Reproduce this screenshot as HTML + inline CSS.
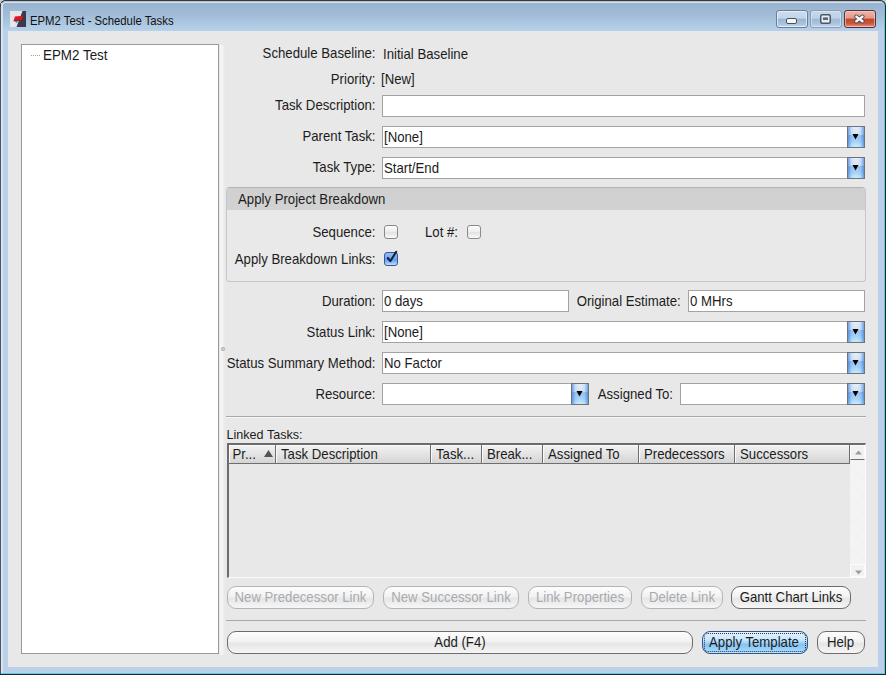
<!DOCTYPE html>
<html><head><meta charset="utf-8">
<style>
*{margin:0;padding:0;box-sizing:border-box}
html,body{width:886px;height:675px;overflow:hidden;background:#c4ccd4}
body{position:relative;font-family:"Liberation Sans",sans-serif;font-size:13.2px;color:#1c1c1c}
.a{position:absolute}
#frame{left:0;top:0;width:886px;height:675px;background:#b8d0e8;border:1px solid #2a2a2a;border-radius:7px 7px 0 0;}
#frame-hl{left:1px;top:1px;width:884px;height:673px;border:1px solid #dbe7f3;border-radius:6px 6px 0 0}
#title{left:2px;top:2px;width:882px;height:29px;background:linear-gradient(#98b4d0,#a6c0da 50%,#b7d1ea)}
#client{left:8px;top:31px;width:870px;height:636px;background:#e8e8e8}
.t{position:absolute;white-space:nowrap;line-height:15px}
.lbl{position:absolute;white-space:nowrap;line-height:15px;text-align:right}
.inp{position:absolute;background:#fff;border:1px solid #a3a3a3;height:22px}
.inp span{position:absolute;left:1px;top:3px;line-height:15px;white-space:nowrap}
.arr{position:absolute;right:-1px;top:-1px;width:18px;height:22px;border:1px solid #6c7480;
 background:linear-gradient(90deg,rgba(30,100,210,.55),rgba(60,130,220,.1) 22%,rgba(0,0,0,0) 40%,rgba(0,0,0,0) 60%,rgba(60,130,220,.1) 78%,rgba(30,100,210,.55)),linear-gradient(#e2edf9,#d4e4f6 40%,#9cc6f0 42%,#a6d0f4 70%,#c6ecfd)}
.arr svg{position:absolute;left:4px;top:7px}
.btn{position:absolute;height:23px;border:1px solid #6c6c6c;border-radius:9px;background:linear-gradient(#fdfdfd,#f2f2f2 45%,#e6e6e6 55%,#f6f6f6);text-align:center;line-height:22px;white-space:nowrap}
.dis{border-color:#b4b4b4;color:#a8abb0}
.cb{position:absolute;width:14px;height:14px;border:1px solid #8a8a8a;border-radius:3px;background:linear-gradient(#fff,#ececec 50%,#e2e2e2 55%,#fafafa)}
.hd{position:absolute;top:0;height:18px;border-right:1px solid #6e6e6e;line-height:19px;white-space:nowrap;padding-left:5px;overflow:hidden;box-shadow:inset 1px 1px 0 #fafafa}
.t,.lbl,.inp span{transform:scaleY(1.1);transform-origin:0 12px}
.s{display:inline-block;line-height:15px;transform:scaleY(1.1);transform-origin:50% 12px}
</style></head><body>
<div class="a" style="left:0;top:0;width:886px;height:675px;background:#1c2626;border-radius:6px 6px 0 0"></div>
<div class="a" style="left:0;top:0;width:885px;height:674px;background:#3a3a3a;border-radius:6px 6px 0 0"></div>
<div class="a" style="left:0;top:7px;width:1px;height:667px;background:#4e565c"></div>
<div class="a" style="left:1px;top:1px;width:884px;height:673px;background:#62c8ea;border-radius:5px 5px 0 0"></div>
<div class="a" style="left:1px;top:1px;width:883px;height:672px;background:#b4c0cc;border-radius:5px 5px 0 0"></div>
<div class="a" style="left:1px;top:3px;width:1px;height:670px;background:#d8e6f4"></div>
<div class="a" style="left:2px;top:2px;width:882px;height:671px;background:#d4e2f0;border-radius:4px 4px 0 0"></div>
<div class="a" style="left:3px;top:3px;width:881px;height:670px;background:#bbd1e9;border-radius:3px 3px 0 0"></div>
<div class="a" style="left:3px;top:3px;width:881px;height:28px;background:linear-gradient(#98b4d0,#a2bdd8 45%,#b8d1ea);border-radius:3px 3px 0 0"></div>
<!-- app icon -->
<svg class="a" style="left:10px;top:11px" width="16" height="16" viewBox="0 0 16 16">
 <rect x="0" y="0" width="16" height="16" fill="#f2f2f2"/>
 <polygon points="0,0 12.5,0 6.5,16 0,16" fill="#e6e6e8"/>
 <polygon points="12.5,0 16,0 16,16 6.5,16" fill="#3a3a48"/>
 <polygon points="4.9,5.6 13,4.8 11.2,9.4 3.5,10.3" fill="#dc1820"/><polygon points="3.5,10.3 11.2,9.4 11.6,8.4 4.1,9.2" fill="#b01018"/>
 <path d="M5,10 L7.8,10 L7.2,12 Q5.5,12 5,10 Z" fill="#2a88d8"/>
</svg>
<div class="t" style="left:30px;top:14px;font-size:12.5px;color:#101010;transform:scaleX(0.905);transform-origin:0 0">EPM2 Test - Schedule Tasks</div>
<!-- title buttons -->
<div class="a" style="left:776px;top:10px;width:32px;height:18px;border:1px solid #6a7d96;border-radius:3px;box-shadow:inset 0 0 0 1px rgba(235,244,252,.75);background:linear-gradient(#cbdcee,#c2d5ea 45%,#9ab5d2 50%,#a8c2dd 80%,#c4d9ee)"></div>
<div class="a" style="left:786px;top:18px;width:11px;height:6px;background:#f6f6f6;border:1px solid #474e5e;border-radius:2px"></div>
<div class="a" style="left:810px;top:10px;width:32px;height:18px;border:1px solid #8a9db6;border-radius:3px;box-shadow:inset 0 0 0 1px rgba(225,236,248,.6);background:linear-gradient(#c6d8ec,#bcd1e8 45%,#a0b9d4 50%,#abc4de 80%,#c2d7ec)"></div>
<svg class="a" style="left:820px;top:14px" width="11" height="10" viewBox="0 0 11 10"><rect x="0.75" y="0.75" width="9.5" height="8.5" rx="1.5" fill="#ececec" stroke="#4e5666" stroke-width="1.5"/><rect x="3" y="3.4" width="5" height="2.6" fill="#4a6890"/></svg>
<div class="a" style="left:844px;top:10px;width:32px;height:18px;border:1px solid #58303c;border-radius:3px;box-shadow:inset 0 0 0 1px rgba(250,210,200,.6);background:linear-gradient(#eeb4a6,#e09a8a 45%,#c44426 50%,#c85a40 80%,#e2a090)"></div>
<svg class="a" style="left:853px;top:13px" width="13" height="12" viewBox="0 0 13 12">
 <path d="M3.3,3.6 L9.5,8.2 M9.5,3.6 L3.3,8.2" stroke="#4a4a56" stroke-width="4.2" stroke-linecap="round"/>
 <path d="M3.3,3.6 L9.5,8.2 M9.5,3.6 L3.3,8.2" stroke="#f8f8f8" stroke-width="2.4" stroke-linecap="round"/>
</svg>

<div id="client" class="a"></div>
<!-- tree panel -->
<div class="a" style="left:21px;top:44px;width:198px;height:610px;background:#fff;border:1px solid #999"></div>
<div class="a" style="left:31px;top:55px;width:10px;height:1px;background:repeating-linear-gradient(90deg,#a0a0a0 0 1px,transparent 1px 2px)"></div>
<div class="t" style="left:43px;top:48px;font-size:13.4px">EPM2 Test</div>
<!-- splitter highlight -->
<div class="a" style="left:220px;top:45px;width:5px;height:610px;background:linear-gradient(90deg,#f6f6f6,#f2f2f2 50%,#e8e8e8)"></div>
<div class="a" style="left:221px;top:347px;width:4px;height:4px;border-radius:50%;background:#d4d4d4;box-shadow:inset 0 0 0 1px #b4b4b4"></div>

<!-- form -->
<div class="lbl" style="right:510.5px;top:46px">Schedule Baseline:</div>
<div class="t" style="left:383px;top:46.5px">Initial Baseline</div>
<div class="lbl" style="right:510.5px;top:72px">Priority:</div>
<div class="t" style="left:381px;top:72px">[New]</div>

<div class="lbl" style="right:510.5px;top:98px">Task Description:</div>
<div class="inp" style="left:382px;top:95px;width:483px"></div>

<div class="lbl" style="right:510.5px;top:129px">Parent Task:</div>
<div class="inp" style="left:382px;top:126px;width:483px"><span>[None]</span><div class="arr"><svg width="7" height="6" viewBox="0 0 7 6"><polygon points="0.5,0 6.5,0 3.5,5.6" fill="#000"/></svg></div></div>

<div class="lbl" style="right:510.5px;top:160px">Task Type:</div>
<div class="inp" style="left:382px;top:157px;width:483px"><span>Start/End</span><div class="arr"><svg width="7" height="6" viewBox="0 0 7 6"><polygon points="0.5,0 6.5,0 3.5,5.6" fill="#000"/></svg></div></div>

<!-- group -->
<div class="a" style="left:226px;top:187px;width:640px;height:95px;border:1px solid #c6c6c6;border-top-color:#b4b4b4;border-radius:4px;background:#e9e9e9;overflow:hidden">
  <div class="a" style="left:0;top:0;width:638px;height:22px;background:linear-gradient(#c8c8c8,#d0d0d0 1px,#d2d2d2)"></div>
</div>
<div class="t" style="left:238px;top:192px">Apply Project Breakdown</div>

<div class="lbl" style="right:510.5px;top:225px">Sequence:</div>
<div class="cb" style="left:384px;top:225px"></div>
<div class="t" style="left:425px;top:225px">Lot #:</div>
<div class="cb" style="left:467px;top:225px"></div>
<div class="lbl" style="right:510.5px;top:252px">Apply Breakdown Links:</div>
<div class="cb" style="left:384px;top:252px;border-color:#4b4f9e;background:linear-gradient(#8ec0f4,#6aa8ee 50%,#5c9cea 55%,#b6e4fc)"></div>
<svg class="a" style="left:385px;top:249px" width="14" height="16" viewBox="0 0 14 16">
 <path d="M2.8,9 L5.3,12.2 L11.2,2.8" stroke="#16203c" stroke-width="2.1" fill="none" stroke-linecap="round" stroke-linejoin="round"/>
</svg>

<div class="lbl" style="right:510.5px;top:294px">Duration:</div>
<div class="inp" style="left:382px;top:290px;width:187px"><span>0 days</span></div>
<div class="lbl" style="right:205.3px;top:294px">Original Estimate:</div>
<div class="inp" style="left:688px;top:290px;width:177px"><span>0 MHrs</span></div>

<div class="lbl" style="right:510.5px;top:325px">Status Link:</div>
<div class="inp" style="left:382px;top:321px;width:483px"><span>[None]</span><div class="arr"><svg width="7" height="6" viewBox="0 0 7 6"><polygon points="0.5,0 6.5,0 3.5,5.6" fill="#000"/></svg></div></div>

<div class="lbl" style="right:510.5px;top:356px">Status Summary Method:</div>
<div class="inp" style="left:382px;top:352px;width:483px"><span>No Factor</span><div class="arr"><svg width="7" height="6" viewBox="0 0 7 6"><polygon points="0.5,0 6.5,0 3.5,5.6" fill="#000"/></svg></div></div>

<div class="lbl" style="right:510.5px;top:387px">Resource:</div>
<div class="inp" style="left:382px;top:383px;width:207px"><div class="arr"><svg width="7" height="6" viewBox="0 0 7 6"><polygon points="0.5,0 6.5,0 3.5,5.6" fill="#000"/></svg></div></div>
<div class="lbl" style="right:213px;top:387px">Assigned To:</div>
<div class="inp" style="left:680px;top:383px;width:185px"><div class="arr"><svg width="7" height="6" viewBox="0 0 7 6"><polygon points="0.5,0 6.5,0 3.5,5.6" fill="#000"/></svg></div></div>

<div class="a" style="left:226px;top:416px;width:640px;height:1px;background:#a8a8a8"></div>
<div class="a" style="left:226px;top:417px;width:640px;height:1px;background:#f6f6f6"></div>

<div class="t" style="left:226.5px;top:428px;font-size:12.6px;transform:scaleY(1.08)">Linked Tasks:</div>

<!-- table -->
<div class="a" style="left:227px;top:443px;width:639px;height:135px;border-left:2px solid #6c6c6c;border-top:2px solid #6c6c6c;border-right:1px solid #fafafa;border-bottom:1px solid #fafafa;background:#e8e8e8"></div>
<div class="a" style="left:229px;top:445px;width:621px;height:19px;background:linear-gradient(#f2f2f2,#e4e4e4 50%,#d4d4d4);border-bottom:1px solid #6e6e6e">
  <div class="hd" style="left:0;width:47px;padding-left:3.5px"><span class="s">Pr...</span></div>
  <div class="hd" style="left:47px;width:155px"><span class="s">Task Description</span></div>
  <div class="hd" style="left:202px;width:51px"><span class="s">Task...</span></div>
  <div class="hd" style="left:253px;width:61px"><span class="s">Break...</span></div>
  <div class="hd" style="left:314px;width:96px"><span class="s">Assigned To</span></div>
  <div class="hd" style="left:410px;width:96px"><span class="s">Predecessors</span></div>
  <div class="hd" style="left:506px;width:115px"><span class="s">Successors</span></div>
</div>
<svg class="a" style="left:264px;top:450px" width="9" height="7" viewBox="0 0 9 7"><polygon points="4.5,0 9,7 0,7" fill="#545454"/></svg>
<!-- scrollbar -->
<div class="a" style="left:850px;top:445px;width:15px;height:132px;background:repeating-linear-gradient(45deg,#f5f5f5 0 1px,#f1f1f1 1px 2px)"></div>
<div class="a" style="left:850px;top:445px;width:15px;height:15px;background:#f2f2f2;border:1px solid #fbfbfb;border-bottom:1px solid #6e6e6e"></div>
<div class="a" style="left:850px;top:564px;width:15px;height:13px;background:#f2f2f2;border:1px solid #fbfbfb"></div>
<svg class="a" style="left:855px;top:450px" width="7" height="5" viewBox="0 0 7 5"><polygon points="3.5,0.6 7,4.4 0,4.4" fill="#9c9c9c"/></svg>
<svg class="a" style="left:855px;top:570px" width="7" height="5" viewBox="0 0 7 5"><polygon points="0,0.6 7,0.6 3.5,4.4" fill="#9c9c9c"/></svg>

<!-- link buttons -->
<div class="btn dis" style="left:227px;top:586px;width:147px"><span class="s">New Predecessor Link</span></div>
<div class="btn dis" style="left:383px;top:586px;width:136px"><span class="s">New Successor Link</span></div>
<div class="btn dis" style="left:528px;top:586px;width:104px"><span class="s">Link Properties</span></div>
<div class="btn dis" style="left:641px;top:586px;width:82px"><span class="s">Delete Link</span></div>
<div class="btn" style="left:731px;top:586px;width:120px"><span class="s">Gantt Chart Links</span></div>

<div class="a" style="left:226px;top:620px;width:640px;height:1px;background:#a8a8a8"></div>

<div class="btn" style="left:227px;top:631px;width:466px"><span class="s">Add (F4)</span></div>
<div class="btn" style="left:702px;top:631px;width:106px;border-color:#38548a;border-radius:8px;background:linear-gradient(#e4f4ff,#c4e4fd 40%,#a6d4fa 50%,#86c4f6 60%,#9cd4fa 85%,#b8e6fd)"><span class="s" style="margin-left:-2px">Apply Template</span></div>
<div class="a" style="left:704px;top:633px;width:102px;height:19px;border:1px dotted #303848;border-radius:4px"></div>
<div class="btn" style="left:817px;top:631px;width:48px"><span class="s" style="margin-left:-1px">Help</span></div>
</body></html>
